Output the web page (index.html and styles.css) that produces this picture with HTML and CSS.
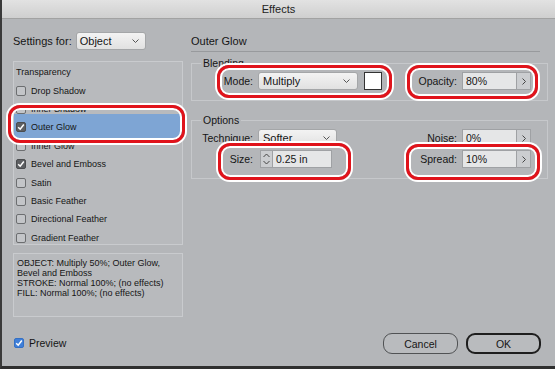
FILE: index.html
```html
<!DOCTYPE html>
<html>
<head>
<meta charset="utf-8">
<link rel="stylesheet" href="styles.css">
</head>
<body>
<div class="dialog">
  <div class="titlebar">Effects</div>
  <div class="main">
    <div class="left">
      <div class="settings">
        <span class="lbl-lg">Settings for:</span>
        <div class="select sel-object"><span class="sel-text">Object</span><svg class="chev" width="7" height="4" viewBox="0 0 7 4"><polyline points="0.5,0.5 3.5,3.5 6.5,0.5" fill="none" stroke="#555" stroke-width="1"/></svg></div>
      </div>
      <div class="listbox">
        <div class="row head">Transparency</div>
        <div class="row"><span class="cb"></span>Drop Shadow</div>
        <div class="row"><span class="cb"></span>Inner Shadow</div>
        <div class="row selected"><span class="cb on"><svg width="8" height="8" viewBox="0 0 8 8"><polyline points="1.2,4.2 3.2,6.2 6.8,1.5" fill="none" stroke="#fff" stroke-width="1.5"/></svg></span>Outer Glow</div>
        <div class="row"><span class="cb"></span>Inner Glow</div>
        <div class="row"><span class="cb on"><svg width="8" height="8" viewBox="0 0 8 8"><polyline points="1.2,4.2 3.2,6.2 6.8,1.5" fill="none" stroke="#fff" stroke-width="1.5"/></svg></span>Bevel and Emboss</div>
        <div class="row"><span class="cb"></span>Satin</div>
        <div class="row"><span class="cb"></span>Basic Feather</div>
        <div class="row"><span class="cb"></span>Directional Feather</div>
        <div class="row"><span class="cb"></span>Gradient Feather</div>
      </div>
      <div class="summary">OBJECT: Multiply 50%; Outer Glow,<br>Bevel and Emboss<br>STROKE: Normal 100%; (no effects)<br>FILL: Normal 100%; (no effects)</div>
    </div>
    <div class="right">
      <div class="heading">Outer Glow</div>
      <fieldset class="group g-blend">
        <legend>Blending</legend>
        <div class="frow">
          <span class="flabel">Mode:</span>
          <div class="select sel-mode"><span class="sel-text">Multiply</span><svg class="chev" width="7" height="4" viewBox="0 0 7 4"><polyline points="0.5,0.5 3.5,3.5 6.5,0.5" fill="none" stroke="#555" stroke-width="1"/></svg></div>
          <span class="swatch"></span>
          <span class="spacer"></span>
          <span class="flabel2">Opacity:</span>
          <div class="num"><span class="val">80%</span><span class="arr"><svg width="4" height="7" viewBox="0 0 4 7"><polyline points="0.5,0.5 3.5,3.5 0.5,6.5" fill="none" stroke="#444" stroke-width="1"/></svg></span></div>
        </div>
      </fieldset>
      <fieldset class="group g-opt">
        <legend>Options</legend>
        <div class="frow">
          <span class="flabel">Technique:</span>
          <div class="select sel-tech"><span class="sel-text">Softer</span><svg class="chev" width="7" height="4" viewBox="0 0 7 4"><polyline points="0.5,0.5 3.5,3.5 6.5,0.5" fill="none" stroke="#555" stroke-width="1"/></svg></div>
          <span class="spacer"></span>
          <span class="flabel2">Noise:</span>
          <div class="num"><span class="val">0%</span><span class="arr"><svg width="4" height="7" viewBox="0 0 4 7"><polyline points="0.5,0.5 3.5,3.5 0.5,6.5" fill="none" stroke="#444" stroke-width="1"/></svg></span></div>
        </div>
        <div class="frow frow2">
          <span class="flabel">Size:</span>
          <div class="sizefield">
            <span class="stepper"><svg width="7" height="12" viewBox="0 0 7 12"><polyline points="0.5,4 3.5,1 6.5,4" fill="none" stroke="#444" stroke-width="1"/><polyline points="0.5,8 3.5,11 6.5,8" fill="none" stroke="#444" stroke-width="1"/></svg></span>
            <span class="val">0.25 in</span>
          </div>
          <span class="spacer"></span>
          <span class="flabel2">Spread:</span>
          <div class="num"><span class="val">10%</span><span class="arr"><svg width="4" height="7" viewBox="0 0 4 7"><polyline points="0.5,0.5 3.5,3.5 0.5,6.5" fill="none" stroke="#444" stroke-width="1"/></svg></span></div>
        </div>
      </fieldset>
    </div>
  </div>
  <div class="footer">
    <div class="preview"><span class="cb blue"><svg width="8" height="8" viewBox="0 0 8 8"><polyline points="1.2,4.2 3.2,6.2 6.8,1.5" fill="none" stroke="#fff" stroke-width="1.5"/></svg></span>Preview</div>
    <div class="buttons"><span class="btn">Cancel</span><span class="btn ok">OK</span></div>
  </div>
  <div class="callout c-glow"></div>
  <div class="callout c-mode"></div>
  <div class="callout c-opacity"></div>
  <div class="callout c-size"></div>
  <div class="callout c-spread"></div>
</div>
</body>
</html>
```
FILE: styles.css
```css
* { box-sizing: border-box; }
html, body { margin: 0; padding: 0; }
body {
  background: #b4b6b9;
  font-family: "Liberation Sans", Arial, sans-serif;
  color: #151515;
}
.dialog {
  position: relative;
  width: 555px;
  height: 369px;
  background: #b4b6b9;
  border-left: 2px solid #3a3a3a;
  border-bottom: 3px solid #2f2f2f;
  display: flex;
  flex-direction: column;
  overflow: hidden;
}
.titlebar {
  height: 19px;
  border-bottom: 1px solid #a2a2a2;
  background: linear-gradient(#e2e2e2, #cfcfcf);
  font-size: 11px;
  line-height: 18px;
  text-align: center;
  color: #222;
}
.main {
  display: flex;
  padding: 13px 0 0 11px;
  gap: 8px;
}
.left { width: 170px; flex: none; }
.right { width: 357px; flex: none; }

.settings { display: flex; align-items: center; height: 18px; gap: 4px; }
.lbl-lg { font-size: 11px; }

.select {
  display: flex;
  align-items: center;
  height: 18px;
  border: 1px solid #a4a6a8;
  border-radius: 3px;
  background: linear-gradient(#f3f3f3, #e1e1e1);
  padding-left: 4px;
  padding-right: 6px;
  font-size: 11px;
}
.sel-text { flex: 1; }
.chev { flex: none; }
.sel-object { width: 70px; padding-left: 3px; }
.sel-mode { width: 100px; padding-right: 7px; }
.sel-tech { width: 79px; padding-right: 6px; }

.listbox {
  margin-top: 11px;
  height: 184px;
  border: 1px solid #c9cbce;
  background: #b8babd;
  padding: 1px 0 0 2px;
  overflow: hidden;
}
.row {
  position: relative;
  height: 18.4px;
  display: flex;
  align-items: center;
  gap: 5px;
  font-size: 9px;
  z-index: 0;
}
.row.selected::before {
  content: "";
  position: absolute;
  left: -2px;
  right: 0;
  top: -4px;
  bottom: -1px;
  background: #7ea5d4;
  z-index: -1;
}
.cb {
  width: 10px;
  height: 10px;
  flex: none;
  border: 1px solid #6c6e70;
  border-radius: 2px;
  background: #c3c5c8;
  display: flex;
  align-items: center;
  justify-content: center;
}
.cb.on { background: #5d5f62; border-color: #4a4c4e; }
.cb.blue { background: #3f7fd9; border-color: #3470c4; }

.summary {
  margin-top: 8px;
  height: 64px;
  border: 1px solid #c9cbce;
  background: #b8babd;
  padding: 4px 3px 0 3px;
  font-size: 9px;
  line-height: 10px;
}

.heading {
  height: 20px;
  margin-right: 8px;
  font-size: 11px;
  line-height: 19px;
  border-bottom: 1px solid #989a9d;
}
.group {
  margin: 0;
  min-width: 0;
  border: 1px solid #c6c8cb;
  padding: 3px 16px 10px 0;
}
.g-blend { margin-top: 5px; }
.g-opt { margin-top: 13px; }
.group legend {
  margin-left: 9px;
  padding: 0 2px;
  font-size: 10.5px;
  line-height: 12px;
}
.frow {
  display: flex;
  align-items: center;
  height: 18px;
  font-size: 10.5px;
}
.frow2 { margin-top: 3px; }
.flabel { width: 61px; margin-right: 5px; text-align: right; flex: none; }
.flabel2 { margin-right: 5px; }
.spacer { flex: 1; }
.swatch {
  width: 18px;
  height: 18px;
  margin-left: 6px;
  background: #fff;
  border: 1px solid #333;
}
.num {
  display: flex;
  width: 69px;
  height: 18px;
  border: 1px solid #9fa1a4;
}
.num .val, .sizefield .val {
  flex: 1;
  background: #e5e6e7;
  padding-left: 3px;
  display: flex;
  align-items: center;
  font-size: 10.5px;
}
.arr {
  width: 14px;
  flex: none;
  background: #cbcdd0;
  border-left: 1px solid #9fa1a4;
  display: flex;
  align-items: center;
  justify-content: center;
}
.sizefield {
  display: flex;
  width: 72px;
  height: 18px;
  margin-left: 2px;
  border: 1px solid #9fa1a4;
}
.stepper {
  width: 12px;
  flex: none;
  background: #cbcdd0;
  border-right: 1px solid #9fa1a4;
  display: flex;
  align-items: center;
  justify-content: center;
}

.footer {
  margin-top: 16px;
  height: 21px;
  padding: 0 14px 0 12px;
  display: flex;
  align-items: center;
  justify-content: space-between;
}
.preview {
  display: flex;
  align-items: center;
  gap: 5px;
  font-size: 10.5px;
  margin-bottom: 2px;
}
.buttons { display: flex; gap: 8px; }
.btn {
  width: 75px;
  height: 21px;
  border: 1px solid #505254;
  border-radius: 9px;
  background: #b9bbbe;
  font-size: 10.5px;
  display: flex;
  align-items: center;
  justify-content: center;
}
.btn.ok { border: 2px solid #1e1e1e; }

.callout {
  position: absolute;
  border: 3px solid #e0131b;
  border-radius: 12px;
  box-shadow: 0 0 0 2px #fff, inset 0 0 0 2px #fff;
}
.c-glow { left: 6px; top: 105px; width: 177px; height: 38px; }
.c-mode { left: 215px; top: 65px; width: 175px; height: 33px; }
.c-opacity { left: 405px; top: 65px; width: 131px; height: 34px; }
.c-size { left: 216px; top: 143px; width: 133px; height: 37px; }
.c-spread { left: 404px; top: 144px; width: 134px; height: 36px; }
```
